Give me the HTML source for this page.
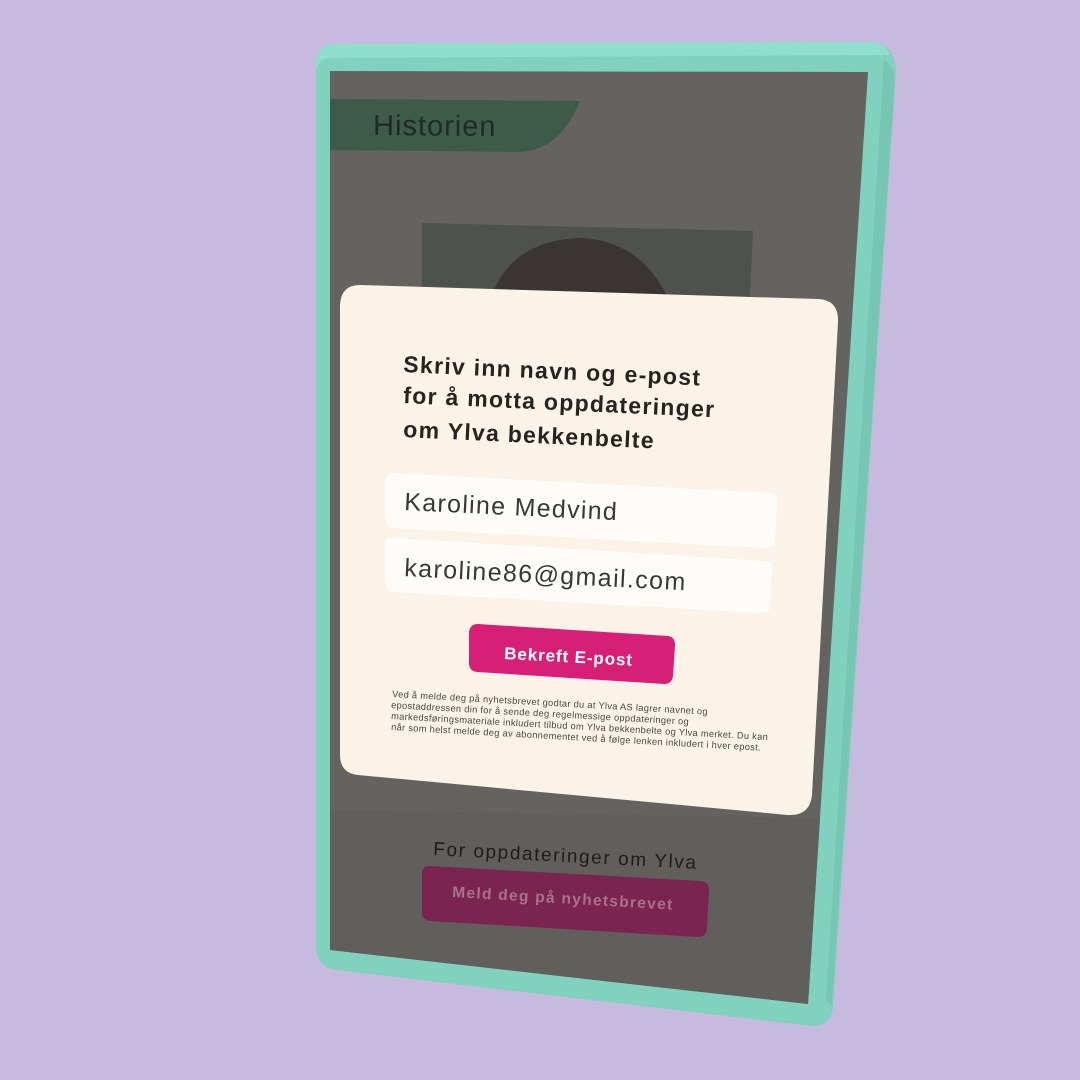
<!DOCTYPE html>
<html><head><meta charset="utf-8"><style>
html,body{margin:0;padding:0;background:#c6badf;}
svg{display:block}
text{font-family:"Liberation Sans","DejaVu Sans",sans-serif}
</style></head><body>
<svg width="1080" height="1080" viewBox="0 0 1080 1080">
<rect width="1080" height="1080" fill="#c6badf"/>
<!-- phone frame -->
<path d="M336 44 L870 42 Q894 43 896 70 L833 1008 Q830 1027 812 1026 L336 970 Q316 967 316 946 L316 66 Q316 44 336 44 Z" fill="#80d2bf"/>
<path d="M336 44 L870 42 Q886 43 890 55 L330 58 Q318 58 318 70 L316 66 Q316 44 336 44 Z" fill="#8ee0cb"/>
<path d="M884 60 Q894 65 895 80 L832 1005 L826 1000 Z" fill="#76c6b3"/>
<!-- screen -->
<path d="M330 71 L868 72 L808 1004 L330 950 Z" fill="#646360"/>
<!-- pattern area hint -->
<path d="M330 810 L820 818 L808 1004 L330 950 Z" fill="#605f5c"/>
<!-- header tab -->
<path d="M330 99 L580 101 Q560 150 520 152 L330 150 Z" fill="#3e5a4b"/>
<text x="373" y="135" font-size="29" letter-spacing="1" fill="#1d2b24" transform="rotate(0.4 373 135)">Historien</text>
<!-- photo -->
<path d="M422 223 L753 231 L750 300 L422 292 Z" fill="#4f514f"/>
<path d="M493 292 Q515 240 580 238 Q640 240 668 298 Z" fill="#3a3532"/>
<!-- dialog -->
<path d="M360 285 L818 299 Q839 300 838 322 L812 795 Q810 816 788 815 L358 775 Q340 773 340 755 L340 305 Q341 285 360 285 Z" fill="#fbf3e8"/>
<g fill="#262421" font-weight="bold" font-size="23" letter-spacing="1.3">
<text x="403" y="372" transform="rotate(2.6 403 372)">Skriv inn navn og e-post</text>
<text x="403" y="403" transform="rotate(2.6 403 403)">for å motta oppdateringer</text>
<text x="403" y="437" transform="rotate(2.6 403 437)">om Ylva bekkenbelte</text>
</g>
<!-- inputs -->
<path d="M393 473 L770 493 Q777 494 777 502 L775 540 Q774 548 766 548 L393 528 Q385 527 385 519 L385 481 Q385 473 393 473 Z" fill="#fefcf8"/>
<path d="M393 538 L765 561 Q773 562 772 570 L770 606 Q769 614 761 613 L393 592 Q385 591 385 583 L385 546 Q385 538 393 538 Z" fill="#fefcf8"/>
<text x="404" y="510" font-size="25" letter-spacing="1.3" fill="#3a3835" transform="rotate(2.7 404 510)">Karoline Medvind</text>
<text x="404" y="576" font-size="25" letter-spacing="1.4" fill="#3a3835" transform="rotate(2.9 404 576)">karoline86@gmail.com</text>
<!-- button -->
<path d="M478 624 L668 636 Q675 637 675 645 L673 676 Q672 684 664 684 L477 672 Q469 671 469 663 L469 632 Q470 624 478 624 Z" fill="#d81f78"/>
<text x="504" y="659" font-size="17" font-weight="bold" letter-spacing="0.9" fill="#fff" transform="rotate(3 504 659)">Bekreft E-post</text>
<!-- disclaimer -->
<g font-size="9.3" fill="#4a4742" letter-spacing="0.3">
<text x="392" y="697" transform="rotate(3.2 392 697)">Ved å melde deg på nyhetsbrevet godtar du at Ylva AS lagrer navnet og</text>
<text x="391" y="708" transform="rotate(3.2 391 708)">epostaddressen din for å sende deg regelmessige oppdateringer og</text>
<text x="391" y="719" transform="rotate(3.2 391 719)">markedsføringsmateriale inkludert tilbud om Ylva bekkenbelte og Ylva merket. Du kan</text>
<text x="391" y="730" transform="rotate(3.2 391 730)">når som helst melde deg av abonnementet ved å følge lenken inkludert i hver epost.</text>
</g>
<!-- bottom -->
<text x="433" y="855" font-size="19" letter-spacing="1.6" fill="#1e1d1b" transform="rotate(3 433 855)">For oppdateringer om Ylva</text>
<path d="M430 866 L701 881 Q709 882 709 890 L707 929 Q706 937 698 937 L430 921 Q422 920 422 912 L422 874 Q422 866 430 866 Z" fill="#7b2450"/>
<text x="452" y="897" font-size="15.5" font-weight="bold" letter-spacing="1.3" fill="#a7728b" transform="rotate(3.3 452 897)">Meld deg på nyhetsbrevet</text>
</svg>
</body></html>
